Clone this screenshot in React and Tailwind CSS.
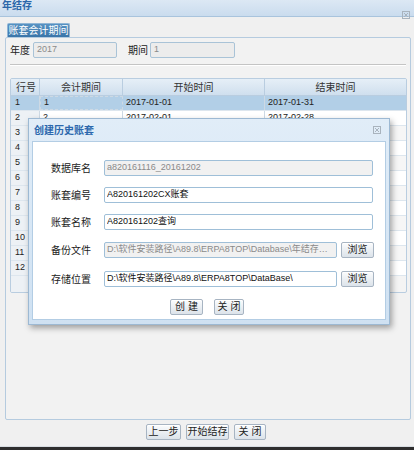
const FONT = { fontFamily: '"Liberation Sans", "Noto Sans CJK SC", sans-serif' };

const periods = [
  ['1', '2017-01-01', '2017-01-31'],
  ['2', '2017-02-01', '2017-02-28'],
  ['3', '2017-03-01', '2017-03-31'],
  ['4', '2017-04-01', '2017-04-30'],
  ['5', '2017-05-01', '2017-05-31'],
  ['6', '2017-06-01', '2017-06-30'],
  ['7', '2017-07-01', '2017-07-31'],
  ['8', '2017-08-01', '2017-08-31'],
  ['9', '2017-09-01', '2017-09-30'],
  ['10', '2017-10-01', '2017-10-31'],
  ['11', '2017-11-01', '2017-11-30'],
  ['12', '2017-12-01', '2017-12-31'],
];

function CloseIcon() {
  return (
    <svg width="8" height="8" viewBox="0 0 8 8" className="shrink-0">
      <rect x="0.5" y="0.5" width="7" height="7" fill="none" stroke="#a9b3bd" strokeWidth="1" />
      <path d="M2 2 L6 6 M6 2 L2 6" stroke="#a9b3bd" strokeWidth="1" />
    </svg>
  );
}

function Btn({ children, className = '' }) {
  return (
    <button
      className={`h-[16px] flex items-center justify-center whitespace-nowrap text-[10px] leading-none text-[#222] border border-[#a7b4c2] rounded-[2px] bg-gradient-to-b from-[#fbfcfd] to-[#dce3ea] shadow-[inset_0_1px_0_#ffffff] ${className}`}
    >
      {children}
    </button>
  );
}

function Field({ label, value, disabled, browse, top }) {
  return (
    <div className={`flex items-center h-[16px] ${top}`}>
      <span className="w-[53px] ml-[18px] text-[10px] text-[#222] whitespace-nowrap">{label}</span>
      <div
        className={`h-[16px] ${browse ? 'w-[233px]' : 'w-[269px]'} flex items-center px-[2px] border border-[#9fbfd8] rounded-[2px] overflow-hidden text-[9px] ${
          disabled ? 'bg-[#f1f1f1] text-[#8a8a8a]' : 'bg-white text-[#111]'
        }`}
      >
        <span className="truncate">{value}</span>
      </div>
      {browse && <Btn className="ml-[4px] w-[33px]">浏览</Btn>}
    </div>
  );
}

function Dialog() {
  return (
    <div className="absolute left-[28px] top-[118px] w-[362px] h-[207px] flex flex-col border border-[#9db9d3] bg-gradient-to-b from-[#e1edf8] to-[#cfe1f2] shadow-[2px_3px_6px_rgba(0,0,0,0.35)]">
      <div className="h-[22px] flex items-center justify-between pl-[5px] pr-[8px]">
        <span className="text-[10px] font-bold text-[#2c68ad]">创建历史账套</span>
        <CloseIcon />
      </div>
      <div className="mx-[3px] h-[179px] bg-white border border-[#b3cde4] flex flex-col">
        <Field top="mt-[18px]" label="数据库名" value="a820161116_20161202" disabled />
        <Field top="mt-[11px]" label="账套编号" value="A820161202CX账套" />
        <Field top="mt-[11px]" label="账套名称" value="A820161202查询" />
        <Field
          top="mt-[12px]"
          label="备份文件"
          value="D:\软件安装路径\A89.8\ERPA8TOP\Database\年结存前备份.bak"
          disabled
          browse
        />
        <Field top="mt-[13px]" label="存储位置" value="D:\软件安装路径\A89.8\ERPA8TOP\DataBase\" browse />
        <div className="mt-[12px] flex justify-center gap-[11px] pr-[4px]">
          <Btn className="w-[33px] whitespace-pre">创 建</Btn>
          <Btn className="w-[30px] whitespace-pre">关 闭</Btn>
        </div>
      </div>
    </div>
  );
}

function PeriodTable() {
  return (
    <div className="ml-[4px] mt-[12px] w-[397px] h-[215px] border border-[#b9cde0] rounded-[2px] bg-[#f4f4f4] overflow-hidden flex flex-col">
      <div className="flex h-[17px] bg-gradient-to-b from-[#e6eff7] to-[#cfdfee] border-b border-[#b9cde0] text-[10px] text-[#333] whitespace-nowrap">
        <div className="w-[29px] pl-[5px] flex items-center border-r border-[#b9cde0]">行号</div>
        <div className="w-[83px] flex items-center justify-center border-r border-[#b9cde0]">会计期间</div>
        <div className="w-[142px] flex items-center justify-center border-r border-[#b9cde0]">开始时间</div>
        <div className="flex-1 flex items-center justify-center">结束时间</div>
      </div>
      {periods.map(([p, s, e], i) => {
        const sel = i === 0;
        return (
          <div
            key={p}
            className={`flex h-[15px] border-b border-[#dde6ee] text-[9px] text-[#222] ${
              sel ? 'bg-[#b2cfe7]' : i % 2 ? 'bg-white' : 'bg-[#f6f6f6]'
            }`}
          >
            <div className={`w-[29px] pl-[4px] flex items-center border-r border-[#cdd9e4] ${sel ? '' : 'bg-[#edf1f5]'}`}>
              {i + 1}
            </div>
            <div
              className={`w-[83px] pl-[3px] flex items-center border-r border-[#cdd9e4] ${
                sel ? 'border border-dashed border-[#6d9ec6]' : ''
              }`}
            >
              {p}
            </div>
            <div className="w-[142px] pl-[3px] flex items-center border-r border-[#cdd9e4]">{s}</div>
            <div className="flex-1 pl-[3px] flex items-center">{e}</div>
          </div>
        );
      })}
      <div className="flex flex-1">
        <div className="w-[29px] bg-[#edf1f5] border-r border-[#cdd9e4]" />
      </div>
    </div>
  );
}

export default function App() {
  return (
    <div style={FONT} className="relative w-[414px] h-[450px] overflow-hidden bg-[#f0f0f0] flex flex-col">
      <div className="h-[17px] flex justify-between pl-[2px] pr-[4px] bg-gradient-to-b from-[#dce8f4] to-[#cadcee] border-b border-[#a9c4dd]">
        <span className="text-[10px] leading-[11px] font-bold text-[#2b66a9]">年结存</span>
        <div className="self-end mb-[-3px]">
          <CloseIcon />
        </div>
      </div>

      <div className="ml-[5px] w-[406px] mt-[6px] flex flex-col">
        <div className="ml-[2px] w-[63px] h-[14px] flex items-center justify-center whitespace-nowrap rounded-t-[2px] border border-b-0 border-[#8fb5d5] bg-gradient-to-b from-[#5792c2] to-[#3a75a9] text-[10px] text-white">
          账套会计期间
        </div>
        <div className="h-[383px] border border-[#b5cbdf] rounded-[2px] bg-[#f2f2f2] flex flex-col">
          <div className="flex items-center h-[16px] mt-[4px] text-[10px] text-[#222] whitespace-nowrap">
            <span className="ml-[4px] w-[23px]">年度</span>
            <div className="w-[84px] h-[16px] px-[3px] flex items-center border border-[#a9c3d7] rounded-[2px] bg-[#ececec] text-[9px] text-[#8a8a8a]">
              2017
            </div>
            <span className="ml-[11px] w-[22px]">期间</span>
            <div className="w-[85px] h-[16px] px-[3px] flex items-center border border-[#a9c3d7] rounded-[2px] bg-[#ececec] text-[9px] text-[#8a8a8a]">
              1
            </div>
          </div>
          <div className="ml-[4px] mr-[4px] mt-[6px] h-[2px] border-t border-[#c4c4c4] border-b border-b-white" />
          <PeriodTable />
        </div>
      </div>

      <div className="mt-[4px] flex justify-center gap-[5px] pr-[2px]">
        <Btn className="w-[35px]">上一步</Btn>
        <Btn className="w-[43px]">开始结存</Btn>
        <Btn className="w-[32px] whitespace-pre">关 闭</Btn>
      </div>

      <div className="mt-auto h-[1px] bg-[#d8dde2]" />
      <div className="h-[3px] bg-[#2e2e2e]" />

      <Dialog />
    </div>
  );
}
